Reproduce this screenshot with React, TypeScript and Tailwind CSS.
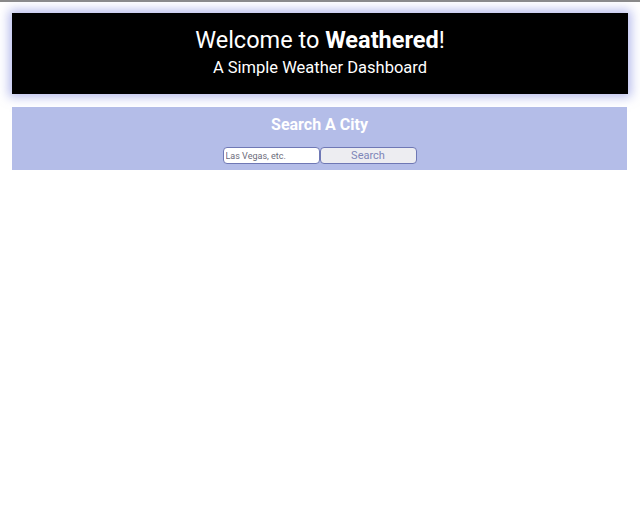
import React from 'react';

export default function App() {
    return (
        <div className="min-h-[518px] bg-white border-t-2 border-[#8a8a8a] font-['Roboto',sans-serif]">
            <header className="mx-3 mt-[11px] bg-black text-white text-center pt-3 pb-[14px] shadow-[0_0_10px_3px_rgba(120,130,220,0.55)]">
                <h1 className="text-[23.5px] leading-[30px]">
                    Welcome to <span className="font-bold">Weathered</span>!
                </h1>
                <h2 className="mt-[1px] text-[16.5px] leading-[24px]">A Simple Weather Dashboard</h2>
            </header>

            <section className="mx-3 mt-[13px] w-[615px] bg-[#b4bde8] text-center pt-[6px] pb-[6px]">
                <h3 className="text-white font-bold text-[16px] leading-[24px]">Search A City</h3>
                <div className="mt-[10px] flex justify-center">
                    <input
                        placeholder="Las Vegas, etc."
                        className="w-[97px] h-[17px] bg-white border border-[#6f78b5] rounded-[4px] px-[2px] text-[9px] placeholder:text-[#6b6b7a] outline-none"
                    />
                    <button className="w-[97px] h-[17px] bg-[#ededf1] border border-[#6f78b5] rounded-[4px] text-[11px] leading-[15px] text-[#7d85b8]">
                        Search
                    </button>
                </div>
            </section>
        </div>
    );
}
